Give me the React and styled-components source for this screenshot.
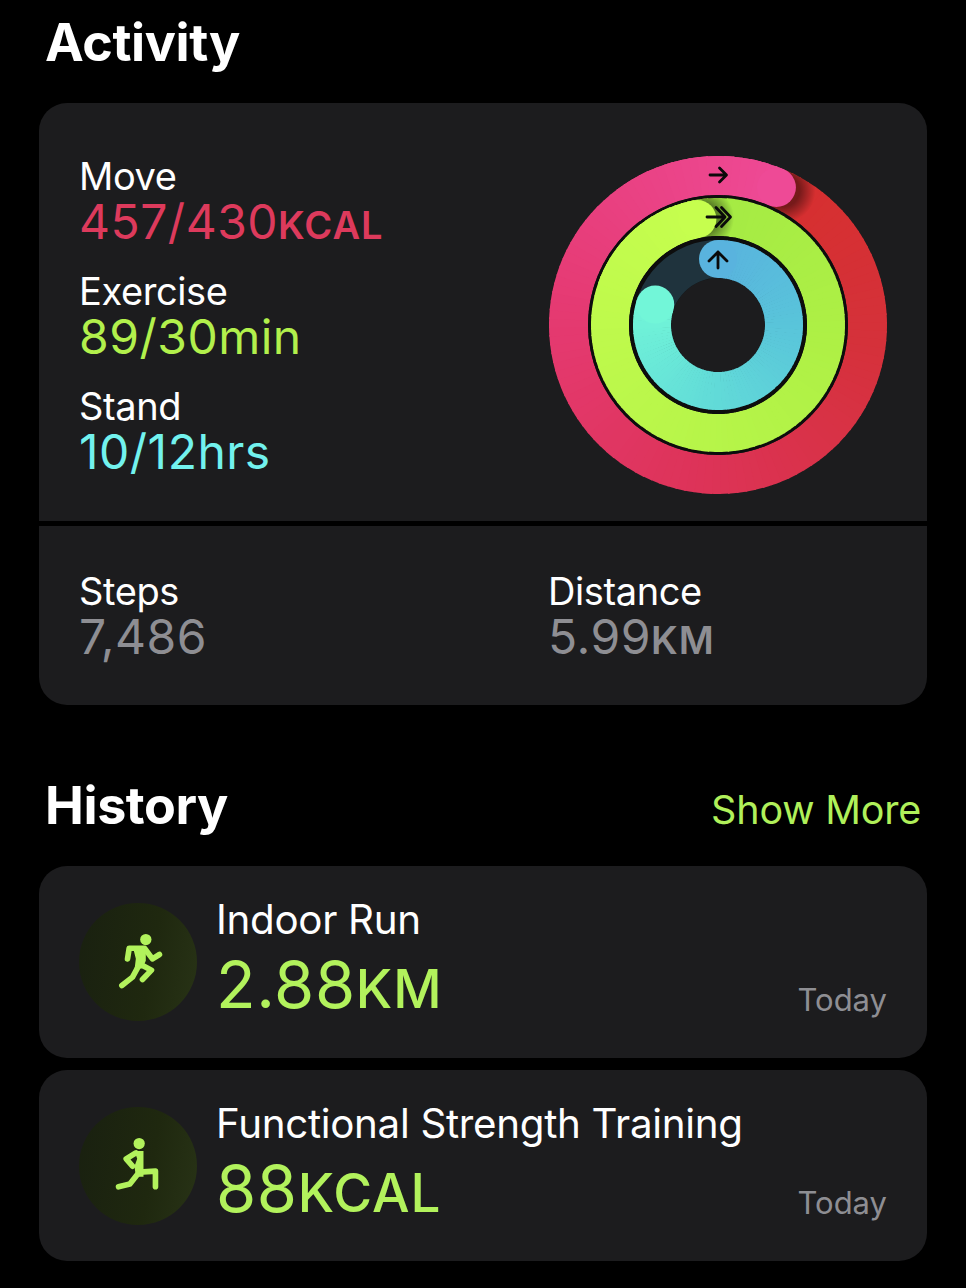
import React from 'react';
import styled, { createGlobalStyle } from 'styled-components';

const GlobalStyle = createGlobalStyle`
  html, body {
    margin: 0;
    padding: 0;
    background: #000;
  }
  body {
    font-family: Inter, "Noto Sans", "Liberation Sans", sans-serif;
    -webkit-font-smoothing: antialiased;
  }
`;

const Page = styled.div`
  width: 966px;
  height: 1288px;
  box-sizing: border-box;
  padding: 0 39px;
  overflow: hidden;
  background: #000;
  color: #fff;
`;

const SectionHeader = styled.div`
  display: flex;
  align-items: baseline;
  justify-content: space-between;
  height: ${(p) => p.$height}px;
  padding: ${(p) => p.$top}px 6px 0 6px;
  box-sizing: border-box;
`;

const SectionTitle = styled.h2`
  margin: 0;
  font-size: 52px;
  line-height: 60px;
  font-weight: 700;
  letter-spacing: -0.4px;
`;

const ShowMore = styled.span`
  font-size: 39.5px;
  line-height: 60px;
  color: #b0f05a;
  letter-spacing: -0.2px;
`;

const Card = styled.section`
  background: #1c1c1e;
  border-radius: 28px;
  overflow: hidden;
  margin-bottom: ${(p) => p.$gap || 0}px;
`;

const RingsRow = styled.div`
  display: flex;
  align-items: flex-start;
  justify-content: space-between;
  height: 423px;
  padding: 52px 39px 0 40px;
  box-sizing: border-box;
  border-bottom: 5px solid #000;
`;

const GoalList = styled.div`
  display: flex;
  flex-direction: column;
  gap: 23px;
`;

const Metric = styled.div`
  display: flex;
  flex-direction: column;
`;

const MetricLabel = styled.span`
  font-size: 38px;
  line-height: 42px;
  letter-spacing: -0.4px;
  color: #fff;
`;

const MetricValue = styled.span`
  font-size: 48px;
  line-height: 50px;
  letter-spacing: 0.5px;
  color: ${(p) => p.$color};
`;

const Unit = styled.span`
  font-size: ${(p) => p.$size || 38}px;
  font-weight: ${(p) => p.$weight || 600};
  line-height: 0;
  letter-spacing: 1px;
`;

const TotalsRow = styled.div`
  display: grid;
  grid-template-columns: 469px 1fr;
  height: 179px;
  padding: 44px 0 0 40px;
  box-sizing: border-box;
`;

const WorkoutCard = styled(Card)`
  display: flex;
  align-items: center;
  height: ${(p) => p.$height}px;
  padding: 0 40px 0 40px;
  box-sizing: border-box;
`;

const WorkoutBadge = styled.div`
  flex: none;
  width: 118px;
  height: 118px;
  border-radius: 50%;
  background: linear-gradient(100deg, #192010 0%, #1f280f 60%, #283316 100%);
  margin-right: 19px;
`;

const WorkoutText = styled.div`
  flex: 1;
  display: flex;
  flex-direction: column;
`;

const WorkoutName = styled.span`
  font-size: 40.3px;
  line-height: 46px;
  letter-spacing: -0.3px;
`;

const WorkoutValue = styled.span`
  font-size: 65px;
  line-height: 84px;
  color: #b2f25c;
  letter-spacing: 0.6px;
`;

const WorkoutDate = styled.span`
  align-self: flex-end;
  margin-bottom: 40px;
  font-size: 31px;
  line-height: 36px;
  color: #8e8e93;
`;

const GOALS = [
  { label: 'Move', value: '457/430', unit: 'KCAL', color: '#dd3a5c' },
  { label: 'Exercise', value: '89/30min', color: '#b2f04c' },
  { label: 'Stand', value: '10/12hrs', color: '#72f2ee' },
];

const WORKOUTS = [
  { name: 'Indoor Run', value: '2.88', unit: 'KM', figure: 'run', height: 192, gap: 12 },
  { name: 'Functional Strength Training', value: '88', unit: 'KCAL', figure: 'lunge', height: 191 },
];

const RINGS = [
  {
    id: 'move',
    radius: 149.5,
    width: 39,
    start: 23,
    end: 383,
    stops: [
      [0, '#d62f2e'],
      [0.2, '#d5313a'],
      [0.45, '#dd3358'],
      [0.7, '#e53a72'],
      [1, '#ee4a96'],
    ],
  },
  {
    id: 'exercise',
    radius: 108,
    width: 38,
    start: -11,
    end: 349,
    backing: 130,
    stops: [
      [0, '#a4ea44'],
      [0.3, '#aef045'],
      [0.6, '#b9f64a'],
      [1, '#c6fe4e'],
    ],
  },
  {
    id: 'stand',
    radius: 66,
    width: 38,
    start: 0,
    end: 288,
    backing: 89,
    track: '#1f333d',
    stops: [
      [0, '#59b3de'],
      [0.3, '#59c4da'],
      [0.65, '#62dcd8'],
      [1, '#72f6d8'],
    ],
  },
];

const CENTER = 170;

const point = (radius, angle) => {
  const rad = ((angle - 90) * Math.PI) / 180;
  return [CENTER + radius * Math.cos(rad), CENTER + radius * Math.sin(rad)];
};

const arcPath = (radius, from, to) => {
  const [x1, y1] = point(radius, from);
  const [x2, y2] = point(radius, to);
  const large = to - from > 180 ? 1 : 0;
  return `M${x1} ${y1}A${radius} ${radius} 0 ${large} 1 ${x2} ${y2}`;
};

const hex = (color) => [1, 3, 5].map((i) => parseInt(color.slice(i, i + 2), 16));

const colorAt = (stops, t) => {
  let i = 0;
  while (i < stops.length - 2 && t > stops[i + 1][0]) i += 1;
  const [t1, c1] = stops[i];
  const [t2, c2] = stops[i + 1];
  const k = Math.min(1, Math.max(0, (t - t1) / (t2 - t1)));
  const a = hex(c1);
  const b = hex(c2);
  return `rgb(${a.map((v, n) => Math.round(v + (b[n] - v) * k)).join(',')})`;
};

// sweeps an arc in short stroked pieces, since svg has no conic gradient
const ArcPieces = ({ ring, from, to }) => {
  const pieces = [];
  const step = 3;
  for (let a = from; a < to; a += step) {
    const t = (a - ring.start) / (ring.end - ring.start);
    pieces.push(
      <path
        key={a}
        d={arcPath(ring.radius, a, Math.min(a + step + 0.6, to))}
        fill="none"
        stroke={colorAt(ring.stops, t)}
        strokeWidth={ring.width}
      />
    );
  }
  return pieces;
};

const annulus = (ring) => {
  const outer = ring.radius + ring.width / 2;
  const inner = ring.radius - ring.width / 2;
  const circle = (r) =>
    `M${CENTER - r} ${CENTER}a${r} ${r} 0 1 0 ${r * 2} 0a${r} ${r} 0 1 0 ${-r * 2} 0Z`;
  return circle(outer) + circle(inner);
};

const Ring = ({ ring }) => {
  const [capX, capY] = point(ring.radius, ring.end);
  const [glowX, glowY] = point(ring.radius, ring.end + 3);
  const [startX, startY] = point(ring.radius, ring.start);

  if (ring.track) {
    return (
      <g>
        <circle cx={CENTER} cy={CENTER} r={ring.backing} fill="#0d0d0d" />
        <circle cx={CENTER} cy={CENTER} r={ring.radius - ring.width / 2} fill="#1c1c1e" />
        <circle
          cx={CENTER}
          cy={CENTER}
          r={ring.radius}
          fill="none"
          stroke={ring.track}
          strokeWidth={ring.width}
        />
        <ArcPieces ring={ring} from={ring.start} to={ring.end} />
        <circle cx={startX} cy={startY} r={ring.width / 2} fill={ring.stops[0][1]} />
        <circle cx={capX} cy={capY} r={ring.width / 2} fill={ring.stops[ring.stops.length - 1][1]} />
      </g>
    );
  }

  return (
    <g>
      {ring.backing && <circle cx={CENTER} cy={CENTER} r={ring.backing} fill="#0d0d0d" />}
      <ArcPieces ring={ring} from={ring.start} to={ring.end} />
      <clipPath id={`${ring.id}-band`}>
        <path d={annulus(ring)} clipRule="evenodd" />
      </clipPath>
      <circle
        cx={glowX}
        cy={glowY}
        r={ring.width * 0.82}
        fill="url(#tipShadow)"
        clipPath={`url(#${ring.id}-band)`}
      />
      <ArcPieces ring={ring} from={ring.end - 60} to={ring.end} />
      <circle cx={capX} cy={capY} r={ring.width / 2} fill={ring.stops[ring.stops.length - 1][1]} />
    </g>
  );
};

const ActivityRings = () => (
  <svg width="340" height="340" viewBox="0 0 340 340" role="img" aria-label="Activity rings">
    <defs>
      <radialGradient id="tipShadow">
        <stop offset="0.5" stopColor="#000" stopOpacity="0.45" />
        <stop offset="1" stopColor="#000" stopOpacity="0" />
      </radialGradient>
    </defs>
    {RINGS.map((ring) => (
      <Ring key={ring.id} ring={ring} />
    ))}
    <g fill="none" stroke="#0a0a0a" strokeWidth="2.8" strokeLinecap="round" strokeLinejoin="round">
      <path d="M162 20H178M171.5 13L178.5 20L171.5 27" />
      <path d="M159 62H176M168 52.5L177 62L168 71.5M173.5 52.5L182.5 62L173.5 71.5" />
      <path d="M170 113V97M161 106L170 97L179 106" />
    </g>
  </svg>
);

const RunnerFigure = () => (
  <svg width="118" height="118" viewBox="25 22 355 355">
    <circle cx="226" cy="132" r="17" fill="#b2f25c" />
    <g fill="none" stroke="#b2f25c" strokeWidth="17" strokeLinecap="round" strokeLinejoin="round">
      <path d="M171 190L176 158H222L246 190L267 177" />
      <path d="M212 208L243 224L216 252" />
      <path d="M202 216L186 245L154 270" />
    </g>
    <path d="M188 158H226L226 196L216 218L192 222L196 190Z" fill="#b2f25c" />
  </svg>
);

const LungeFigure = () => (
  <svg width="118" height="118" viewBox="25 22 355 355">
    <circle cx="206" cy="132" r="17" fill="#b2f25c" />
    <g fill="none" stroke="#b2f25c" strokeWidth="17" strokeLinecap="round" strokeLinejoin="round">
      <path d="M196 160L167 178L186 200" />
      <path d="M206 218L255 215V262" />
      <path d="M200 226L178 254L144 262" />
    </g>
    <path d="M192 154H219V232L196 232L192 200L200 178Z" fill="#b2f25c" />
  </svg>
);

const App = () => (
  <Page>
    <GlobalStyle />
    <SectionHeader $height={103} $top={13}>
      <SectionTitle>Activity</SectionTitle>
    </SectionHeader>

    <Card>
      <RingsRow>
        <GoalList>
          {GOALS.map((goal) => (
            <Metric key={goal.label}>
              <MetricLabel>{goal.label}</MetricLabel>
              <MetricValue $color={goal.color}>
                {goal.value}
                {goal.unit && <Unit>{goal.unit}</Unit>}
              </MetricValue>
            </Metric>
          ))}
        </GoalList>
        <ActivityRings />
      </RingsRow>
      <TotalsRow>
        <Metric>
          <MetricLabel>Steps</MetricLabel>
          <MetricValue $color="#8e8e93">7,486</MetricValue>
        </Metric>
        <Metric>
          <MetricLabel>Distance</MetricLabel>
          <MetricValue $color="#8e8e93">
            5.99<Unit>KM</Unit>
          </MetricValue>
        </Metric>
      </TotalsRow>
    </Card>

    <SectionHeader $height={161} $top={71}>
      <SectionTitle>History</SectionTitle>
      <ShowMore>Show More</ShowMore>
    </SectionHeader>

    {WORKOUTS.map((workout) => (
      <WorkoutCard key={workout.name} $height={workout.height} $gap={workout.gap}>
        <WorkoutBadge>{workout.figure === 'run' ? <RunnerFigure /> : <LungeFigure />}</WorkoutBadge>
        <WorkoutText>
          <WorkoutName>{workout.name}</WorkoutName>
          <WorkoutValue>
            {workout.value}
            <Unit $size={53} $weight={500}>{workout.unit}</Unit>
          </WorkoutValue>
        </WorkoutText>
        <WorkoutDate>Today</WorkoutDate>
      </WorkoutCard>
    ))}
  </Page>
);

export default App;
